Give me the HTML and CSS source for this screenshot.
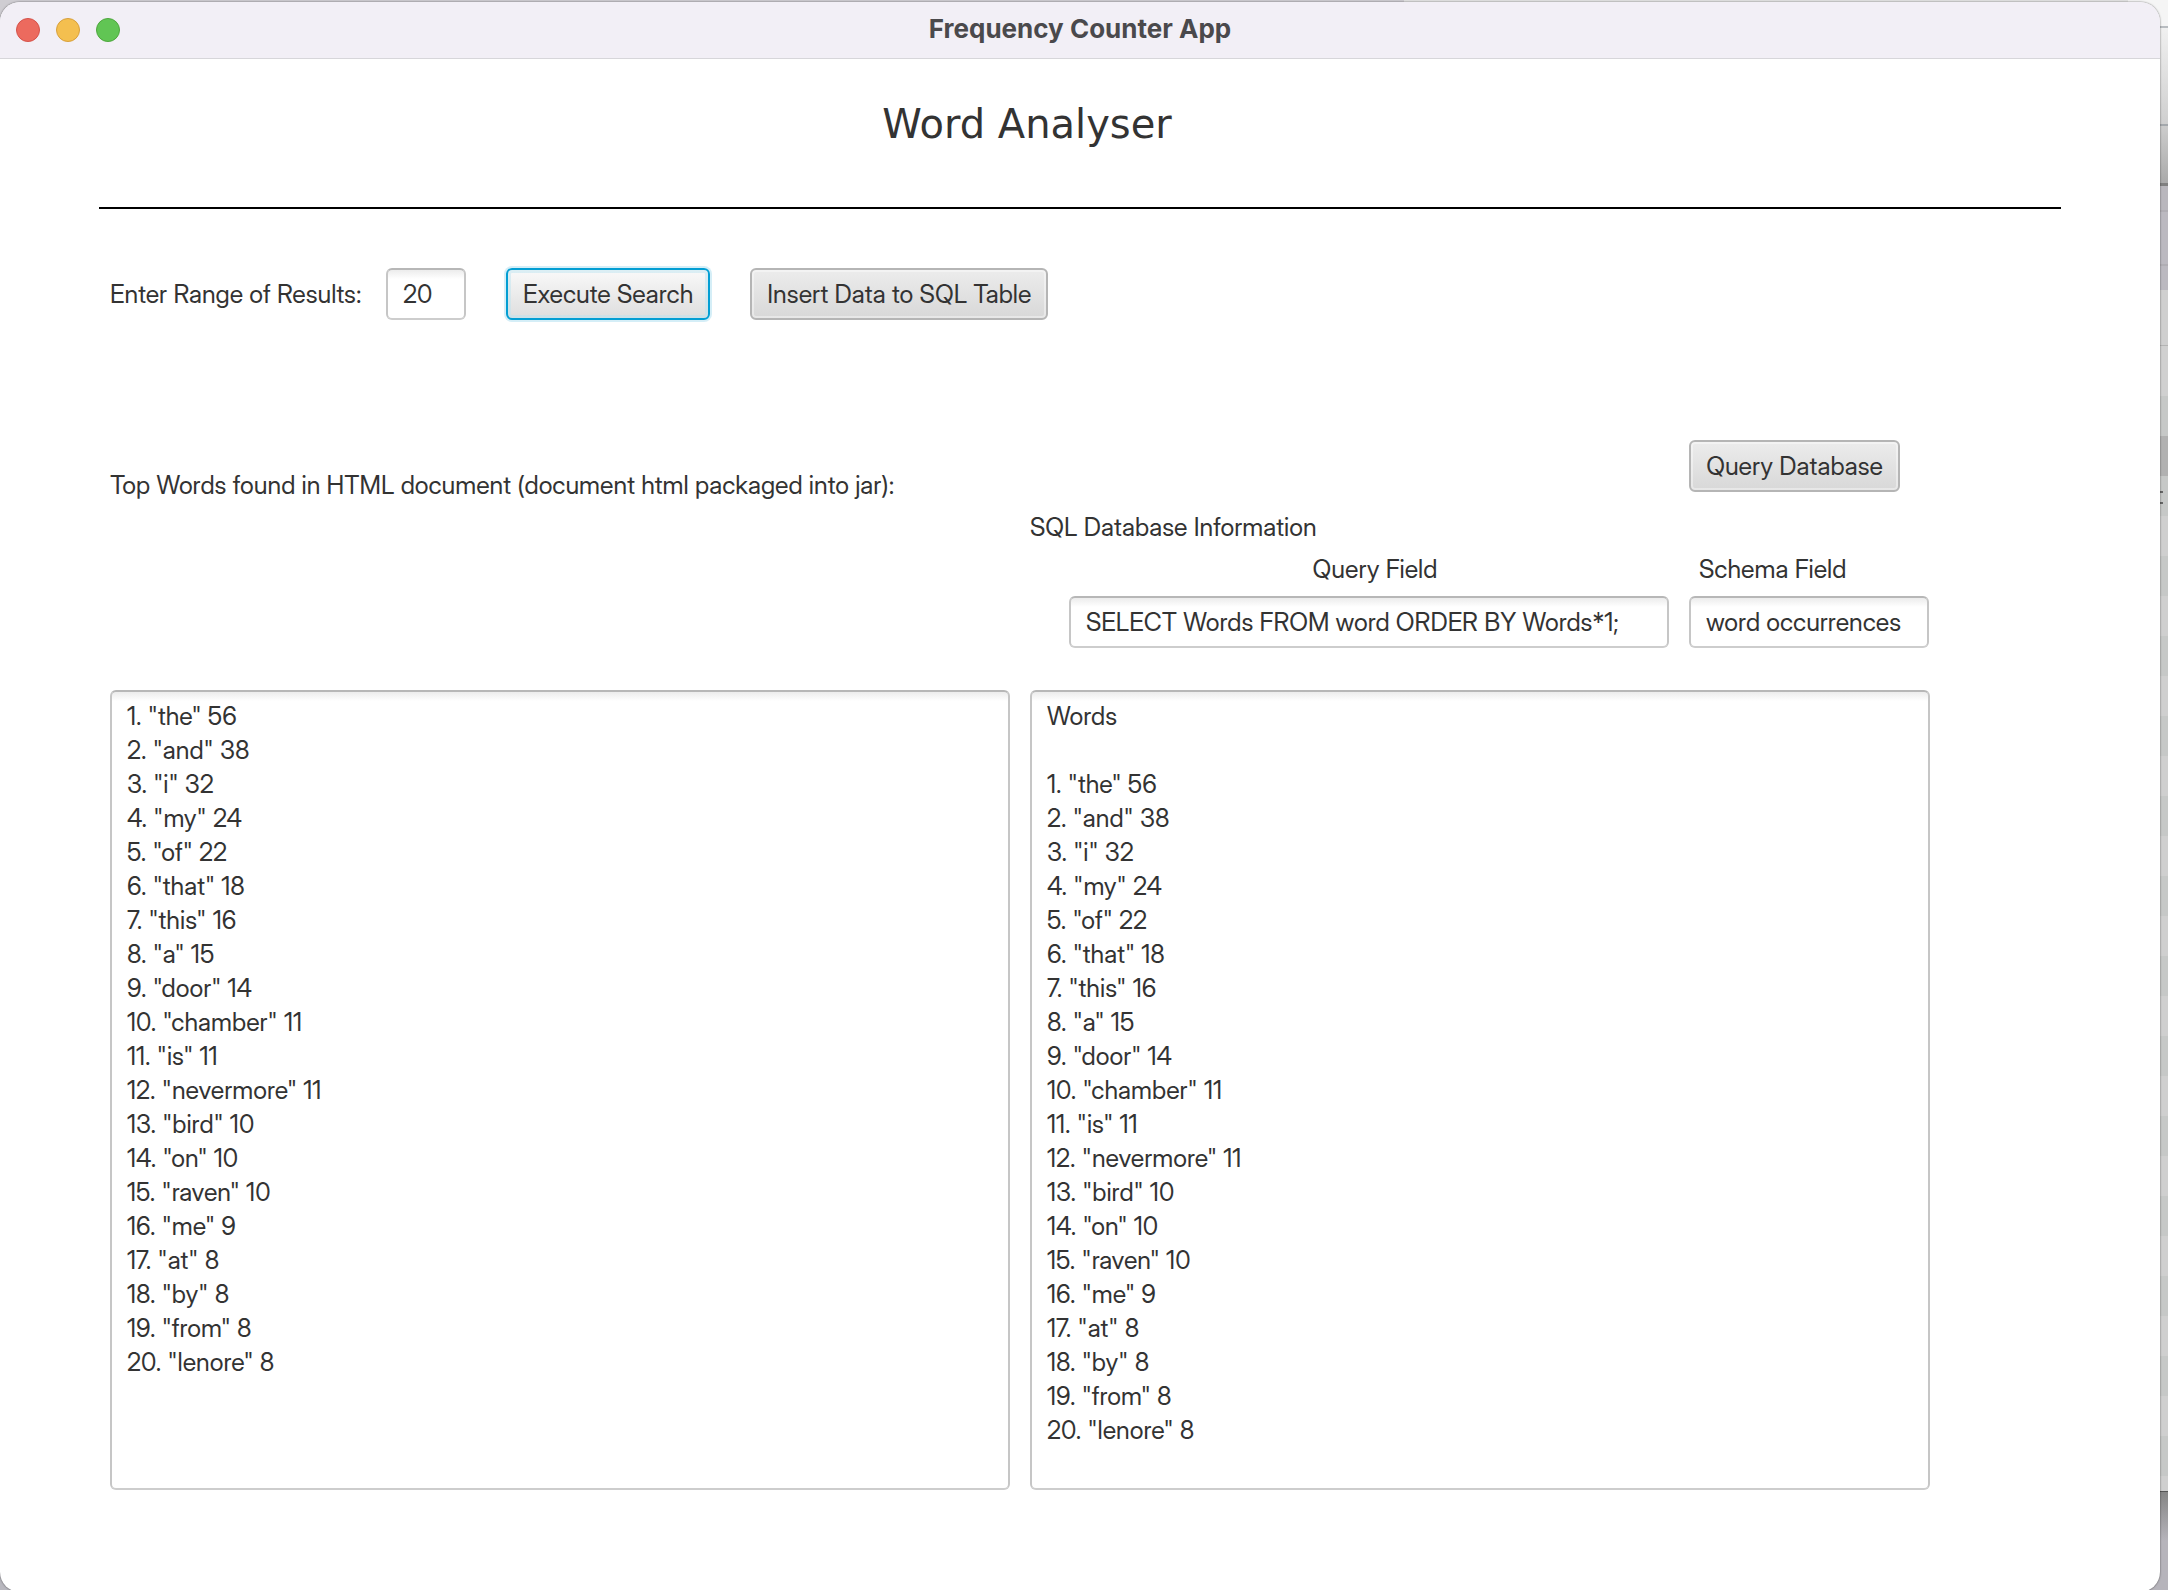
FILE: index.html
```html
<!DOCTYPE html>
<html lang="en">
<head>
<meta charset="utf-8">
<title>Frequency Counter App</title>
<link rel="stylesheet" href="styles.css">
</head>
<body>
<div class="window">
  <header class="titlebar">
    <div class="lights">
      <button class="light light-close" type="button" aria-label="Close"></button>
      <button class="light light-minimize" type="button" aria-label="Minimize"></button>
      <button class="light light-zoom" type="button" aria-label="Zoom"></button>
    </div>
    <div class="window-title">Frequency Counter App</div>
  </header>
  <main class="content">
    <h1 class="heading">Word Analyser</h1>
    <hr class="rule">
    <form class="toolbar">
      <label class="range-label" for="range">Enter Range of Results:</label>
      <input class="field range-field" id="range" type="text" value="20">
      <button class="button button-focused" type="button">Execute Search</button>
      <button class="button" type="button">Insert Data to SQL Table</button>
    </form>
    <div class="panels">
      <section class="panel">
        <div class="panel-head">
          <label class="results-label" for="results">Top Words found in HTML document (document html packaged into jar):</label>
        </div>
        <textarea class="output" id="results" spellcheck="false" readonly>1. "the" 56
2. "and" 38
3. "i" 32
4. "my" 24
5. "of" 22
6. "that" 18
7. "this" 16
8. "a" 15
9. "door" 14
10. "chamber" 11
11. "is" 11
12. "nevermore" 11
13. "bird" 10
14. "on" 10
15. "raven" 10
16. "me" 9
17. "at" 8
18. "by" 8
19. "from" 8
20. "lenore" 8</textarea>
      </section>
      <section class="panel">
        <div class="panel-head">
          <div class="query-action"><button class="button query-button" type="button">Query Database</button></div>
          <label class="database-label" for="database">SQL Database Information</label>
          <div class="query-row">
            <div class="query-cell">
              <label class="query-label" for="query">Query Field</label>
              <input class="field" id="query" type="text" spellcheck="false" value="SELECT Words FROM word ORDER BY Words*1;">
            </div>
            <div class="schema-cell">
              <label class="schema-label" for="schema">Schema Field</label>
              <input class="field" id="schema" type="text" spellcheck="false" value="word occurrences">
            </div>
          </div>
        </div>
        <textarea class="output" id="database" spellcheck="false" readonly>Words

1. "the" 56
2. "and" 38
3. "i" 32
4. "my" 24
5. "of" 22
6. "that" 18
7. "this" 16
8. "a" 15
9. "door" 14
10. "chamber" 11
11. "is" 11
12. "nevermore" 11
13. "bird" 10
14. "on" 10
15. "raven" 10
16. "me" 9
17. "at" 8
18. "by" 8
19. "from" 8
20. "lenore" 8</textarea>
      </section>
    </div>
  </main>
</div>
</body>
</html>
```
FILE: styles.css
```css
* { box-sizing: border-box; }

html { background: #b9b8bf; }

/* The desktop behind the window shows as a thin edge at the top and right. */
body {
  margin: 0;
  height: 100vh;
  padding: 2px 8px 0 0;
  overflow: hidden;
  font-family: "Inter Display", Inter, "Liberation Sans", sans-serif;
  font-size: 25px;
  line-height: 34px;
  color: #333;
  background:
    linear-gradient(#666, #666) right 5px top 491px / 3px 2px no-repeat,
    linear-gradient(#666, #666) right 5px top 502px / 3px 2px no-repeat,
    linear-gradient(90deg, #cfcdd2 66%, #e4e4e4 66%) left top / calc(100% - 40px) 22px no-repeat,
    linear-gradient(
      #f5f5f5 0 26px, #b8bcc0 26px 28px, #f0f0f0 28px, #cfcfcf 124px, #a4a8ac 124px 126px,
      #cccccc 126px, #aaaaaa 183px, #808080 183px 186px, #b9b7bd 186px 210px, #b0aeb4 210px 212px,
      #bbb9c0 212px 264px, #b0aeb4 264px 266px, #bbb9c0 266px 290px, #cfcfcf 290px 345px,
      #b4b4b4 345px 346px, #d0d0d0 346px 396px, #c6c8c7 396px 436px, #b1b1b1 436px 476px,
      #c6c8c7 476px 516px, transparent 516px) right top / 40px 516px no-repeat,
    linear-gradient(#555 0 1px, #858585 1px, #b6b4bb 50px) right top 1491px / 40px 100px no-repeat,
    repeating-linear-gradient(#cfcfcf 0 40px, #c6c8c7 40px 80px) right top 516px / 40px 975px no-repeat;
}

.window {
  min-height: 100vh;
  background: #fff;
  border-radius: 20px;
  box-shadow: 0 0 2px rgba(0, 0, 0, .6);
}

.titlebar {
  display: grid;
  grid-template-columns: 1fr auto 1fr;
  align-items: center;
  height: 57px;
  padding: 0 16px 1px;
  background: #f2eff6;
  border-bottom: 1px solid #d7d6da;
  border-radius: 20px 20px 0 0;
}

.lights { display: flex; gap: 16px; }

.light {
  width: 24px;
  height: 24px;
  padding: 0;
  border: 1px solid;
  border-radius: 50%;
}
.light-close { background: #ec6a5e; border-color: #d5524a; }
.light-minimize { background: #f4bf4f; border-color: #d8a03c; }
.light-zoom { background: #61c554; border-color: #4ea73d; }

.window-title {
  padding-bottom: 2px;
  font-family: Inter, "Liberation Sans", sans-serif;
  font-size: 26px;
  font-weight: 700;
  color: #4a494c;
}

.heading {
  margin: 0;
  padding: 41px 106px 59px 0;
  font: 400 40px/48px "DejaVu Sans", sans-serif;
  text-align: center;
}

.rule {
  height: 2px;
  margin: 0 99px;
  border: 0;
  background: #000;
}

.toolbar {
  display: flex;
  align-items: center;
  padding: 59px 99px 0 110px;
  gap: 40px;
}

.range-label { width: 236px; white-space: nowrap; }

.field, .button, .output {
  font: inherit;
  color: inherit;
  border: 2px solid;
  border-radius: 6px;
}

.field, .output {
  border-color: #b7b7b7 #c6c6c6 #cdcdcd;
  outline: 0;
  background: linear-gradient(#ececec, #fff 9px);
}

.field {
  width: 100%;
  height: 52px;
  padding: 0 15px;
}
.range-field { width: 80px; }

.button {
  height: 52px;
  padding: 0 15px;
  white-space: nowrap;
  border-color: #b5b5b5;
  background: linear-gradient(#ececec, #d8d8d8);
  box-shadow: inset 0 0 0 2px rgba(255, 255, 255, .4);
}

.button-focused {
  border-color: #039ed3;
  background: linear-gradient(#f9f9f9, #dedede);
  box-shadow: 0 0 0 2px #d5eef7, inset 0 0 0 3px rgba(190, 228, 240, .5);
}

.panels {
  display: grid;
  grid-template-columns: 1fr 1fr;
  gap: 20px;
  padding: 120px 230px 100px 110px;
}

.panel { display: flex; flex-direction: column; gap: 42px; }

.panel-head {
  display: flex;
  flex-direction: column;
  height: 208px;
}

.results-label { padding-top: 28px; white-space: nowrap; }

.query-action { display: flex; justify-content: flex-end; }
.query-button { margin-right: 30px; }

.database-label { padding-top: 18px; }

.query-row {
  display: grid;
  grid-template-columns: 1fr 240px;
  gap: 20px;
  padding: 8px 1px 0 39px;
}

.query-cell, .schema-cell { display: flex; flex-direction: column; gap: 10px; }
.query-label { padding-left: 12px; text-align: center; }
.schema-label { padding-left: 10px; }

.output {
  display: block;
  width: 100%;
  height: 800px;
  padding: 7px 15px;
  resize: none;
}
```
